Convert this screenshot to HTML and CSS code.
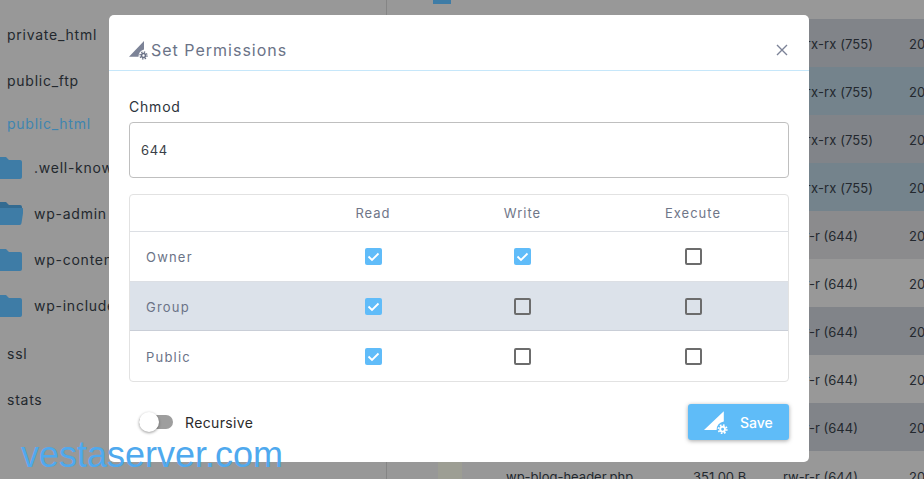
FILE: index.html
```html
<!DOCTYPE html>
<html lang="en">
<head>
<meta charset="utf-8">
<title>Set Permissions</title>
<link rel="stylesheet" href="styles.css">
</head>
<body>
<div class="page">
  <aside class="side">
    <div class="dir dir-first">private_html</div>
    <div class="dir">public_ftp</div>
    <div class="dir dir-active">public_html</div>
    <div class="sub"><svg class="folder" viewBox="0 0 28 24"><path d="M2 2h9l3 3h11a2 2 0 0 1 2 2v15a2 2 0 0 1-2 2H2z"/></svg>.well-known</div>
    <div class="sub"><svg class="folder" viewBox="0 0 28 24"><path class="folder-back" d="M2 1h9l3 3h11a2 2 0 0 1 2 2v4H2z"/><path d="M3 7h24a1.500 1.500 0 0 1 1.500 2l-2 13a2 2 0 0 1-2 2H1z"/></svg>wp-admin</div>
    <div class="sub"><svg class="folder" viewBox="0 0 28 24"><path d="M2 2h9l3 3h11a2 2 0 0 1 2 2v15a2 2 0 0 1-2 2H2z"/></svg>wp-content</div>
    <div class="sub"><svg class="folder" viewBox="0 0 28 24"><path d="M2 2h9l3 3h11a2 2 0 0 1 2 2v15a2 2 0 0 1-2 2H2z"/></svg>wp-includes</div>
    <div class="dir dir-ssl">ssl</div>
    <div class="dir">stats</div>
  </aside>
  <main class="files">
    <div class="files-top"><span class="top-icon"></span></div>
    <div class="row row-dark"><span class="perm perm-x">rwx-rx-rx (755)</span><span class="date">20</span></div>
    <div class="row row-blue"><span class="perm perm-x">rwx-rx-rx (755)</span><span class="date">20</span></div>
    <div class="row row-dark"><span class="perm perm-x">rwx-rx-rx (755)</span><span class="date">20</span></div>
    <div class="row row-blue"><span class="perm perm-x">rwx-rx-rx (755)</span><span class="date">20</span></div>
    <div class="row row-mid"><span class="perm">rw-r-r (644)</span><span class="date">20</span></div>
    <div class="row"><span class="perm">rw-r-r (644)</span><span class="date">20</span></div>
    <div class="row row-dark"><span class="perm">rw-r-r (644)</span><span class="date">20</span></div>
    <div class="row"><span class="perm">rw-r-r (644)</span><span class="date">20</span></div>
    <div class="row row-dark"><span class="perm">rw-r-r (644)</span><span class="date">20</span></div>
    <div class="row"><span class="file-icon"></span><span class="fname">wp-blog-header.php</span><span class="size">351.00 B</span><span class="perm">rw-r-r (644)</span><span class="date">20</span></div>
  </main>
</div>

<section class="modal">
  <header class="modal-head">
    <svg class="title-icon" viewBox="0 0 20 20"><path d="M0 16.700 15 1v8.500a7 7 0 0 0-5.500 7.200z"/><g class="gear"><circle class="hub" cx="14.500" cy="15.500" r="2"/><circle class="teeth" cx="14.500" cy="15.500" r="3.500"/></g></svg>
    <h2 class="modal-title">Set Permissions</h2>
    <svg class="close" viewBox="0 0 12 12"><path d="M1 1l10 10M11 1 1 11"/></svg>
  </header>
  <div class="modal-body">
    <label class="field-label">Chmod</label>
    <div class="input">644</div>
    <div class="perm-table">
      <div class="pt-row pt-head"><span></span><span class="pt-col">Read</span><span class="pt-col">Write</span><span class="pt-col">Execute</span></div>
      <div class="pt-row">
        <span class="pt-name">Owner</span>
        <span class="pt-cell"><i class="cb cb-on"><svg viewBox="0 0 17 17"><path d="M3.500 8.500l3.500 3.500 6.500-6.500"/></svg></i></span>
        <span class="pt-cell"><i class="cb cb-on"><svg viewBox="0 0 17 17"><path d="M3.500 8.500l3.500 3.500 6.500-6.500"/></svg></i></span>
        <span class="pt-cell"><i class="cb"></i></span>
      </div>
      <div class="pt-row pt-alt">
        <span class="pt-name">Group</span>
        <span class="pt-cell"><i class="cb cb-on"><svg viewBox="0 0 17 17"><path d="M3.500 8.500l3.500 3.500 6.500-6.500"/></svg></i></span>
        <span class="pt-cell"><i class="cb"></i></span>
        <span class="pt-cell"><i class="cb"></i></span>
      </div>
      <div class="pt-row pt-last">
        <span class="pt-name">Public</span>
        <span class="pt-cell"><i class="cb cb-on"><svg viewBox="0 0 17 17"><path d="M3.500 8.500l3.500 3.500 6.500-6.500"/></svg></i></span>
        <span class="pt-cell"><i class="cb"></i></span>
        <span class="pt-cell"><i class="cb"></i></span>
      </div>
    </div>
    <footer class="modal-foot">
      <div class="toggle-wrap"><span class="toggle"><span class="knob"></span></span><span class="toggle-label">Recursive</span></div>
      <button class="save" type="button">
        <svg class="save-icon" viewBox="0 0 20 20"><path d="M0 16.700 16.500 1v8.500a7 7 0 0 0-6 7.200z"/><g class="gear-w"><circle class="hub" cx="15.500" cy="16" r="2"/><circle class="teeth" cx="15.500" cy="16" r="3.500"/></g></svg>
        <span>Save</span>
      </button>
    </footer>
  </div>
</section>

<div class="watermark">vestaserver.com</div>
</body>
</html>
```

FILE: styles.css
```css
* { box-sizing: border-box; }
html, body { margin: 0; height: 100%; }
body {
  width: 924px;
  height: 479px;
  overflow: hidden;
  background: #989898;
  font-family: Inter, "Open Sans", sans-serif;
  color: #23282e;
  position: relative;
}
.page { display: flex; height: 479px; overflow: hidden; }

.side { width: 387px; flex: none; border-right: 1px solid #858585; padding-top: 12px; overflow: hidden; font-size: 14px; letter-spacing: .75px; }
.dir { height: 46px; line-height: 46px; padding-left: 7px; white-space: nowrap; }
.dir-first { height: 46px; }
.dir-active { color: #3f85b0; height: 40px; line-height: 40px; }
.dir-ssl { margin-top: 3px; }
.sub { display: flex; align-items: center; height: 46px; white-space: nowrap; padding-left: 34px; position: relative; }
.folder { position: absolute; left: -5px; top: 11px; width: 28px; height: 24px; fill: #3e7ca6; }
.folder-back { fill: #336b91; }

.files { flex: 1; min-width: 0; font-size: 13px; overflow: hidden; }
.files-top { height: 19px; padding-left: 46px; }
.top-icon { display: block; width: 18px; height: 4px; background: #3e7ca6; }
.row { display: flex; align-items: center; height: 48px; padding-top: 2px; position: relative; background: #989898; white-space: nowrap; }
.row-dark { background: #818489; }
.row-blue { background: #74838c; }
.row-mid { background: #8b8b8d; }
.perm { position: absolute; left: 396px; }
.perm-x { left: 390px; letter-spacing: .1px; }
.date { position: absolute; left: 522px; }
.file-icon { position: absolute; left: 51px; top: 0; width: 24px; height: 40px; background: #9d9e94; border-radius: 2px 6px 0 0; }
.fname { position: absolute; left: 119px; top: 18px; }
.size { position: absolute; left: 306px; top: 18px; }
.row:last-child .perm, .row:last-child .date { top: 18px; }

.modal {
  position: absolute;
  left: 109px;
  top: 15px;
  width: 700px;
  height: 447px;
  background: #fff;
  border-radius: 5px;
  display: flex;
  flex-direction: column;
}
.modal-head { flex: none; height: 56px; display: flex; align-items: center; padding: 14px 21px 0 20px; border-bottom: 1px solid #c6e7fa; }
.title-icon { width: 20px; height: 20px; flex: none; fill: #7c8397; margin-right: 2px; }
.hub { fill: none; stroke-width: 1.600; }
.teeth { fill: none; stroke-width: 1.400; stroke-dasharray: 1.370 1.370; }
.gear .hub, .gear .teeth { stroke: #6a7186; }
.gear-w .hub, .gear-w .teeth { stroke: #fff; }
.modal-title { margin: 0; flex: 1; font-size: 16px; font-weight: 400; letter-spacing: 1px; color: #6b7387; }
.close { width: 12px; height: 12px; fill: none; stroke: #7c8397; stroke-width: 1.400; }

.modal-body { flex: 1; padding: 0 20px; display: flex; flex-direction: column; }
.field-label { display: block; margin-top: 28px; height: 23px; line-height: 15px; font-size: 14px; letter-spacing: .8px; color: #2d333c; }
.input { height: 56px; line-height: 54px; border: 1px solid #bfbfbf; border-radius: 4px; padding-left: 11px; font-size: 13px; letter-spacing: .6px; color: #3a3f47; }

.perm-table { margin-top: 16px; border: 1px solid #e2e2e2; border-radius: 4px; overflow: hidden; }
.pt-row { display: grid; grid-template-columns: 169px 148px 151px 190px; align-items: center; height: 50px; border-top: 1px solid #dcdfe4; }
.pt-head { height: 36px; border-top: 0; }
.pt-alt { background: #dce2ea; border-bottom: 1px solid #c9ced7; }
.pt-last { border-top: 0; }
.pt-col { text-align: center; font-size: 13px; letter-spacing: 1px; color: #6f7688; }
.pt-name { padding-left: 16px; font-size: 13px; letter-spacing: 1.200px; color: #6b7387; }
.pt-alt .pt-name, .pt-last .pt-name { padding-top: 1px; }
.pt-cell { display: flex; justify-content: center; }
.cb { display: block; width: 17px; height: 17px; border: 2px solid #6c6c6c; border-radius: 2px; }
.cb-on { border: 0; background: #60bcf9; }
.cb-on svg { display: block; width: 17px; height: 17px; fill: none; stroke: #fff; stroke-width: 1.800; }

.modal-foot { flex: 1; display: flex; align-items: center; justify-content: space-between; }
.toggle-wrap { display: flex; align-items: center; padding-left: 10px; }
.toggle { display: block; position: relative; width: 34px; height: 14px; border-radius: 7px; background: #9e9e9e; margin-right: 12px; }
.knob { position: absolute; left: 0; top: -3px; width: 20px; height: 20px; border-radius: 50%; background: #fff; box-shadow: 0 1px 3px rgba(0,0,0,.4); }
.toggle-label { font-size: 14px; letter-spacing: .35px; color: #2a2a2a; }
.save {
  width: 101px;
  height: 36px;
  display: flex;
  align-items: center;
  padding: 0 0 0 16px;
  border: 0;
  border-radius: 3px;
  background: #5fbcf8;
  color: #fff;
  font-family: inherit;
  font-size: 14px;
  font-weight: 500;
  box-shadow: 0 1px 4px rgba(0,0,0,.35);
}
.save-icon { width: 24px; height: 24px; fill: #fff; margin-right: 12px; flex: none; }

.watermark {
  position: absolute;
  left: 21px;
  top: 433px;
  font-family: "Liberation Sans", Arial, sans-serif;
  font-size: 36px;
  line-height: 44px;
  color: #4fa9ee;
  white-space: nowrap;
}
```
